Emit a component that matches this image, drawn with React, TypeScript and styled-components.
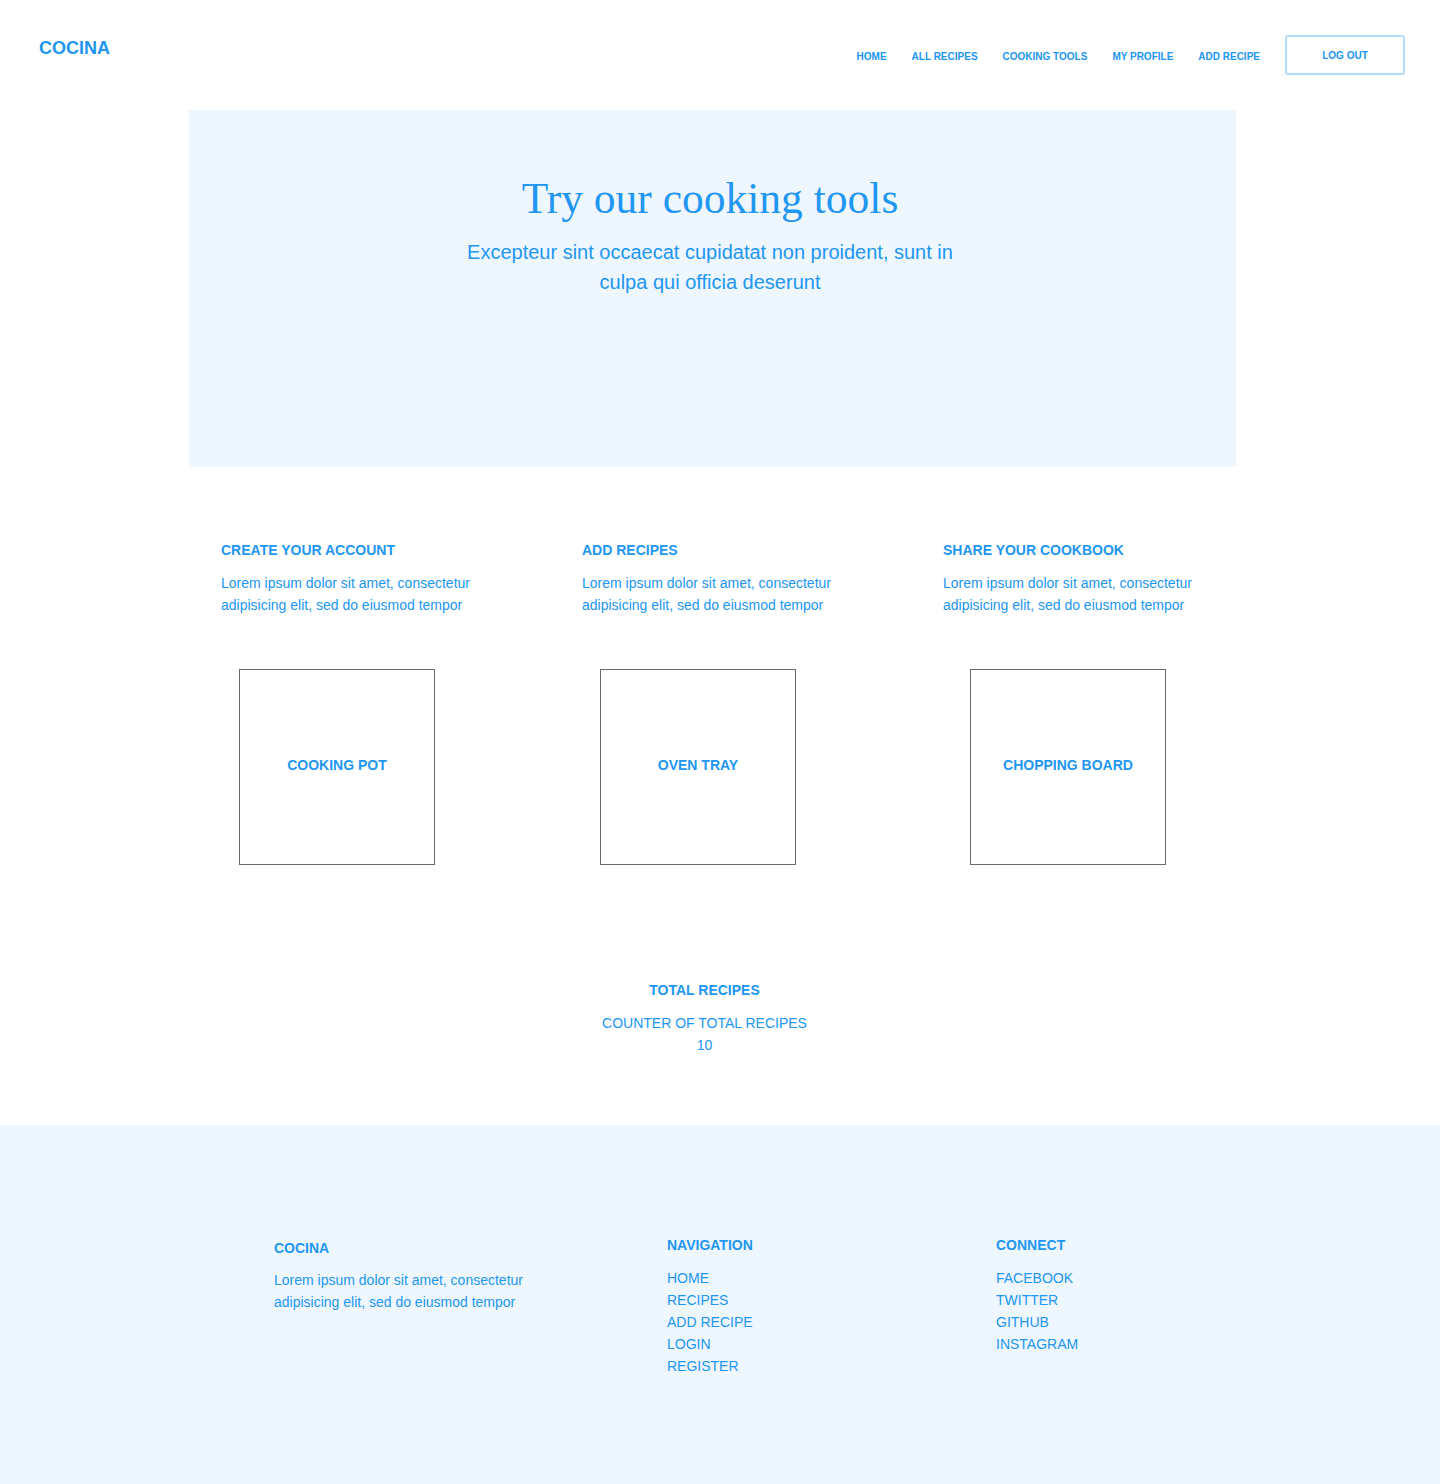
import React from 'react'
import styled, { createGlobalStyle } from 'styled-components'

//GLOBAL
const GlobalStyle = createGlobalStyle`
  body {
    margin: 0;
    background: #ffffff;
    font-family: 'Liberation Sans', Arial, sans-serif;
    color: #2196f3;
  }
  * { box-sizing: border-box; }
`

//DATA
const NAV_LINKS = ['HOME', 'ALL RECIPES', 'COOKING TOOLS', 'MY PROFILE', 'ADD RECIPE']

const FEATURES = ['CREATE YOUR ACCOUNT', 'ADD RECIPES', 'SHARE YOUR COOKBOOK']

const TOOLS = ['COOKING POT', 'OVEN TRAY', 'CHOPPING BOARD']

const FOOTER_NAV = ['HOME', 'RECIPES', 'ADD RECIPE', 'LOGIN', 'REGISTER']
const FOOTER_CONNECT = ['FACEBOOK', 'TWITTER', 'GITHUB', 'INSTAGRAM']

const LOREM = 'Lorem ipsum dolor sit amet, consectetur adipisicing elit, sed do eiusmod tempor'

//STYLES
const Page = styled.div`
  width: 1440px;
  min-height: 1484px;
  display: flex;
  flex-direction: column;
`

const Header = styled.header`
  height: 110px;
  display: flex;
  justify-content: space-between;
  align-items: flex-start;
  padding: 35px 35px 0 39px;
`

const Logo = styled.a`
  margin-top: 2px;
  font-size: 18px;
  line-height: 22px;
  font-weight: 700;
  color: #2196f3;
  text-decoration: none;
`

const Nav = styled.nav`
  display: flex;
  align-items: center;
  gap: 25px;
`

const NavLink = styled.a`
  padding-top: 2px;
  font-size: 10px;
  font-weight: 700;
  color: #2196f3;
  text-decoration: none;
`

const LogOutButton = styled.button`
  width: 120px;
  height: 40px;
  padding: 1px 0 0;
  border: 2px solid #b6dcfb;
  border-radius: 3px;
  background: #ffffff;
  font-family: 'Liberation Sans', Arial, sans-serif;
  font-size: 10px;
  font-weight: 700;
  color: #2196f3;
`

const Hero = styled.section`
  width: 1047px;
  height: 357px;
  margin-left: 189px;
  padding: 62px 5px 0 0;
  background: #eff7fe;
  display: flex;
  flex-direction: column;
  align-items: center;
`

const HeroTitle = styled.h1`
  margin: 0;
  font-family: 'Liberation Serif', Georgia, serif;
  font-weight: 400;
  font-size: 43.5px;
  line-height: 52px;
`

const HeroText = styled.p`
  margin: 13px 0 0;
  max-width: 500px;
  text-align: center;
  font-size: 20px;
  line-height: 30px;
`

const Features = styled.section`
  display: grid;
  grid-template-columns: 361px 361px 361px;
  padding-left: 221px;
  margin-top: 72px;
`

const Heading = styled.h3<{ $top?: number }>`
  margin: ${p => p.$top || 0}px 0 11px;
  font-size: 14px;
  line-height: 22px;
  font-weight: 700;
`

const Text = styled.p<{ $top?: number }>`
  margin: ${p => p.$top || 0}px 0 0;
  max-width: 270px;
  font-size: 14px;
  line-height: 22px;
`

const Tools = styled.section`
  display: grid;
  grid-template-columns: 361px 370px 196px;
  padding-left: 239px;
  margin-top: 53px;
`

const ToolBox = styled.div`
  width: 196px;
  height: 196px;
  padding-bottom: 4px;
  border: 1px solid #6b6b6b;
  display: flex;
  align-items: center;
  justify-content: center;
  font-size: 14px;
  font-weight: 700;
`

const Total = styled.section`
  margin-top: 114px;
  padding-right: 31px;
  display: flex;
  flex-direction: column;
  align-items: center;
  text-align: center;
`

const Counter = styled.p`
  margin: 0;
  font-size: 14px;
  line-height: 22px;
`

const Footer = styled.footer`
  margin-top: 69px;
  height: 359px;
  background: #eff7fe;
  display: grid;
  grid-template-columns: 393px 329px auto;
  padding: 109px 0 0 274px;
`

const FooterCol = styled.div`
  display: flex;
  flex-direction: column;
  align-items: flex-start;
`

const FooterLink = styled.a`
  font-size: 14px;
  line-height: 22px;
  color: #2196f3;
  text-decoration: none;
`

//MAIN COMPONENT
export default function App() {
  return (
    <Page>
      <GlobalStyle />

      {/* HEADER */}
      <Header>
        <Logo href="#">COCINA</Logo>
        <Nav>
          {NAV_LINKS.map(link => (
            <NavLink key={link} href="#">{link}</NavLink>
          ))}
          <LogOutButton>LOG OUT</LogOutButton>
        </Nav>
      </Header>

      {/* HERO */}
      <Hero>
        <HeroTitle>Try our cooking tools</HeroTitle>
        <HeroText>Excepteur sint occaecat cupidatat non proident, sunt in culpa qui officia deserunt</HeroText>
      </Hero>

      {/* FEATURES */}
      <Features>
        {FEATURES.map(title => (
          <div key={title}>
            <Heading>{title}</Heading>
            <Text>{LOREM}</Text>
          </div>
        ))}
      </Features>

      {/* TOOLS */}
      <Tools>
        {TOOLS.map(tool => (
          <ToolBox key={tool}>{tool}</ToolBox>
        ))}
      </Tools>

      {/* TOTAL */}
      <Total>
        <Heading>TOTAL RECIPES</Heading>
        <Counter>COUNTER OF TOTAL RECIPES</Counter>
        <Counter>10</Counter>
      </Total>

      {/* FOOTER */}
      <Footer>
        <FooterCol>
          <Heading $top={3}>COCINA</Heading>
          <Text $top={-1}>{LOREM}</Text>
        </FooterCol>
        <FooterCol>
          <Heading>NAVIGATION</Heading>
          {FOOTER_NAV.map(link => (
            <FooterLink key={link} href="#">{link}</FooterLink>
          ))}
        </FooterCol>
        <FooterCol>
          <Heading>CONNECT</Heading>
          {FOOTER_CONNECT.map(link => (
            <FooterLink key={link} href="#">{link}</FooterLink>
          ))}
        </FooterCol>
      </Footer>
    </Page>
  )
}
